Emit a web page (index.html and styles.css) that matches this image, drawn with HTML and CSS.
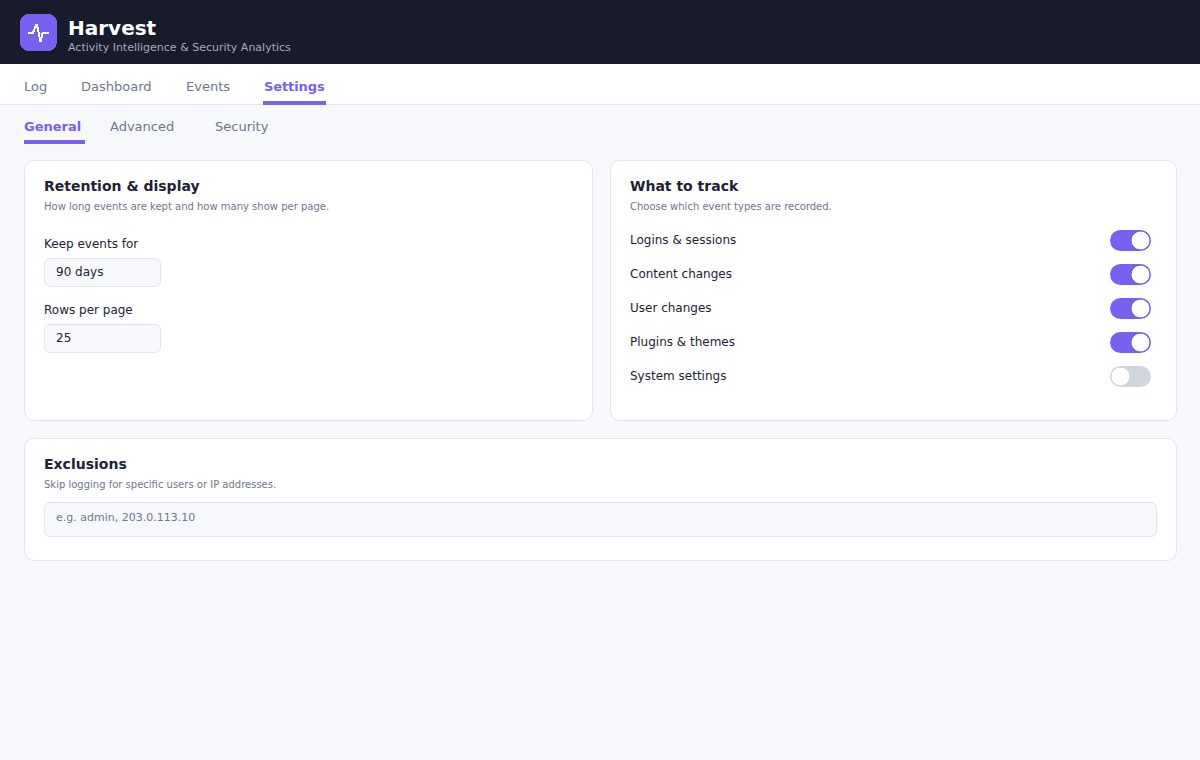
FILE: index.html
```html
<!DOCTYPE html>
<html lang="en">
<head>
<meta charset="utf-8">
<title>Harvest – Settings</title>
<link rel="stylesheet" href="styles.css">
</head>
<body>
<header class="header">
  <svg class="logo" viewBox="0 0 37 37" shape-rendering="crispEdges" aria-hidden="true">
    <rect width="37" height="37" rx="9" fill="#7860f0"/>
    <path d="M8 19h5l3-8h1l3.500 17 2-9h6.500" fill="none" stroke="#fff" stroke-width="2"/>
  </svg>
  <div class="brand">
    <h1 class="brand-name">Harvest</h1>
    <p class="brand-tagline">Activity Intelligence &amp; Security Analytics</p>
  </div>
</header>
<nav class="tabs">
  <a class="tab tab-log">Log</a>
  <a class="tab tab-dashboard">Dashboard</a>
  <a class="tab tab-events">Events</a>
  <a class="tab tab-settings active">Settings</a>
</nav>
<nav class="subtabs">
  <a class="subtab subtab-general active">General</a>
  <a class="subtab subtab-advanced">Advanced</a>
  <a class="subtab">Security</a>
</nav>
<main class="content">
  <section class="card">
    <h2 class="card-title">Retention &amp; display</h2>
    <p class="card-note">How long events are kept and how many show per page.</p>
    <div class="fields">
      <div class="field"><span class="label">Keep events for</span><div class="select">90 days</div></div>
      <div class="field"><span class="label">Rows per page</span><div class="select">25</div></div>
    </div>
  </section>
  <section class="card">
    <h2 class="card-title">What to track</h2>
    <p class="card-note">Choose which event types are recorded.</p>
    <div class="options">
      <div class="option"><span class="label">Logins &amp; sessions</span><span class="toggle on"></span></div>
      <div class="option"><span class="label">Content changes</span><span class="toggle on"></span></div>
      <div class="option"><span class="label">User changes</span><span class="toggle on"></span></div>
      <div class="option"><span class="label">Plugins &amp; themes</span><span class="toggle on"></span></div>
      <div class="option"><span class="label">System settings</span><span class="toggle"></span></div>
    </div>
  </section>
  <section class="card card-wide">
    <h2 class="card-title">Exclusions</h2>
    <p class="card-note">Skip logging for specific users or IP addresses.</p>
    <div class="input">e.g. admin, 203.0.113.10</div>
  </section>
</main>
</body>
</html>
```
FILE: styles.css
```css
* { box-sizing: border-box; margin: 0; padding: 0; }
body {
  min-height: 760px;
  background: #f6f8fc;
  color: #1e2234;
  font-family: "DejaVu Sans", sans-serif;
  font-size: 12px;
}
.header {
  display: flex;
  gap: 11px;
  height: 64px;
  padding: 14px 20px;
  background: #181b2b;
}
.logo { width: 37px; height: 37px; }
.brand-name { color: #fff; font-size: 20px; line-height: 28px; }
.brand-tagline { color: #a5aabe; font-size: 11px; line-height: 13px; margin-top: -1px; }
.tabs {
  display: flex;
  height: 41px;
  padding: 0 24px;
  background: #fff;
  border-bottom: 1px solid #e1e5ed;
  font-size: 13px;
  line-height: 16px;
}
.tab { height: 41px; padding-top: 15px; color: #6e768c; }
.tab-log { width: 57px; }
.tab-dashboard { width: 105px; }
.tab-events { width: 77px; }
.tab-settings { width: 63px; padding-left: 1px; letter-spacing: -0.1px; }
.subtabs {
  display: flex;
  height: 39px;
  padding: 0 24px;
  font-size: 13px;
  line-height: 16px;
}
.subtab { padding-top: 14px; color: #6e768c; }
.subtab-general { width: 61px; margin-right: 25px; }
.subtab-advanced { width: 105px; }
.active { color: #7860f0; font-weight: bold; border-bottom: 4px solid #7860f0; }
.content {
  display: grid;
  grid-template-columns: 569px 567px;
  grid-template-rows: 261px 123px;
  gap: 17px;
  padding: 16px 24px;
}
.card {
  padding: 16px 19px;
  background: #fff;
  border: 1px solid #e1e5ed;
  border-radius: 10px;
}
.card-wide { grid-column: 1 / -1; }
.card-title { font-size: 14px; line-height: 18px; }
.card-note { margin-top: 5px; color: #6e768c; font-size: 10px; line-height: 14px; }
.fields { display: flex; flex-direction: column; gap: 15px; margin-top: 22px; }
.label { display: block; line-height: 16px; }
.select {
  width: 117px;
  height: 29px;
  margin-top: 6px;
  padding: 5px 11px;
  background: #f6f8fc;
  border: 1px solid #e1e5ed;
  border-radius: 6px;
  line-height: 16px;
}
.options { display: flex; flex-direction: column; gap: 13px; margin-top: 16px; padding-right: 6px; }
.option { display: flex; justify-content: space-between; height: 21px; }
.option .label { margin-top: 2px; }
/* The knob is a gradient disc so it stays centred in the odd-sized track. */
.toggle {
  width: 41px;
  height: 21px;
  border-radius: 11px;
  background: radial-gradient(circle at 10.5px 10.5px, #fff 8.6px, #d1d5de 9.2px);
}
.toggle.on { background: radial-gradient(circle at 30.5px 10.5px, #fff 8.6px, #7860f0 9.2px); }
.input {
  height: 35px;
  margin-top: 10px;
  padding: 7px 11px;
  background: #f6f8fc;
  border: 1px solid #e1e5ed;
  border-radius: 6px;
  color: #6e768c;
  font-size: 11px;
  line-height: 16px;
}
```
